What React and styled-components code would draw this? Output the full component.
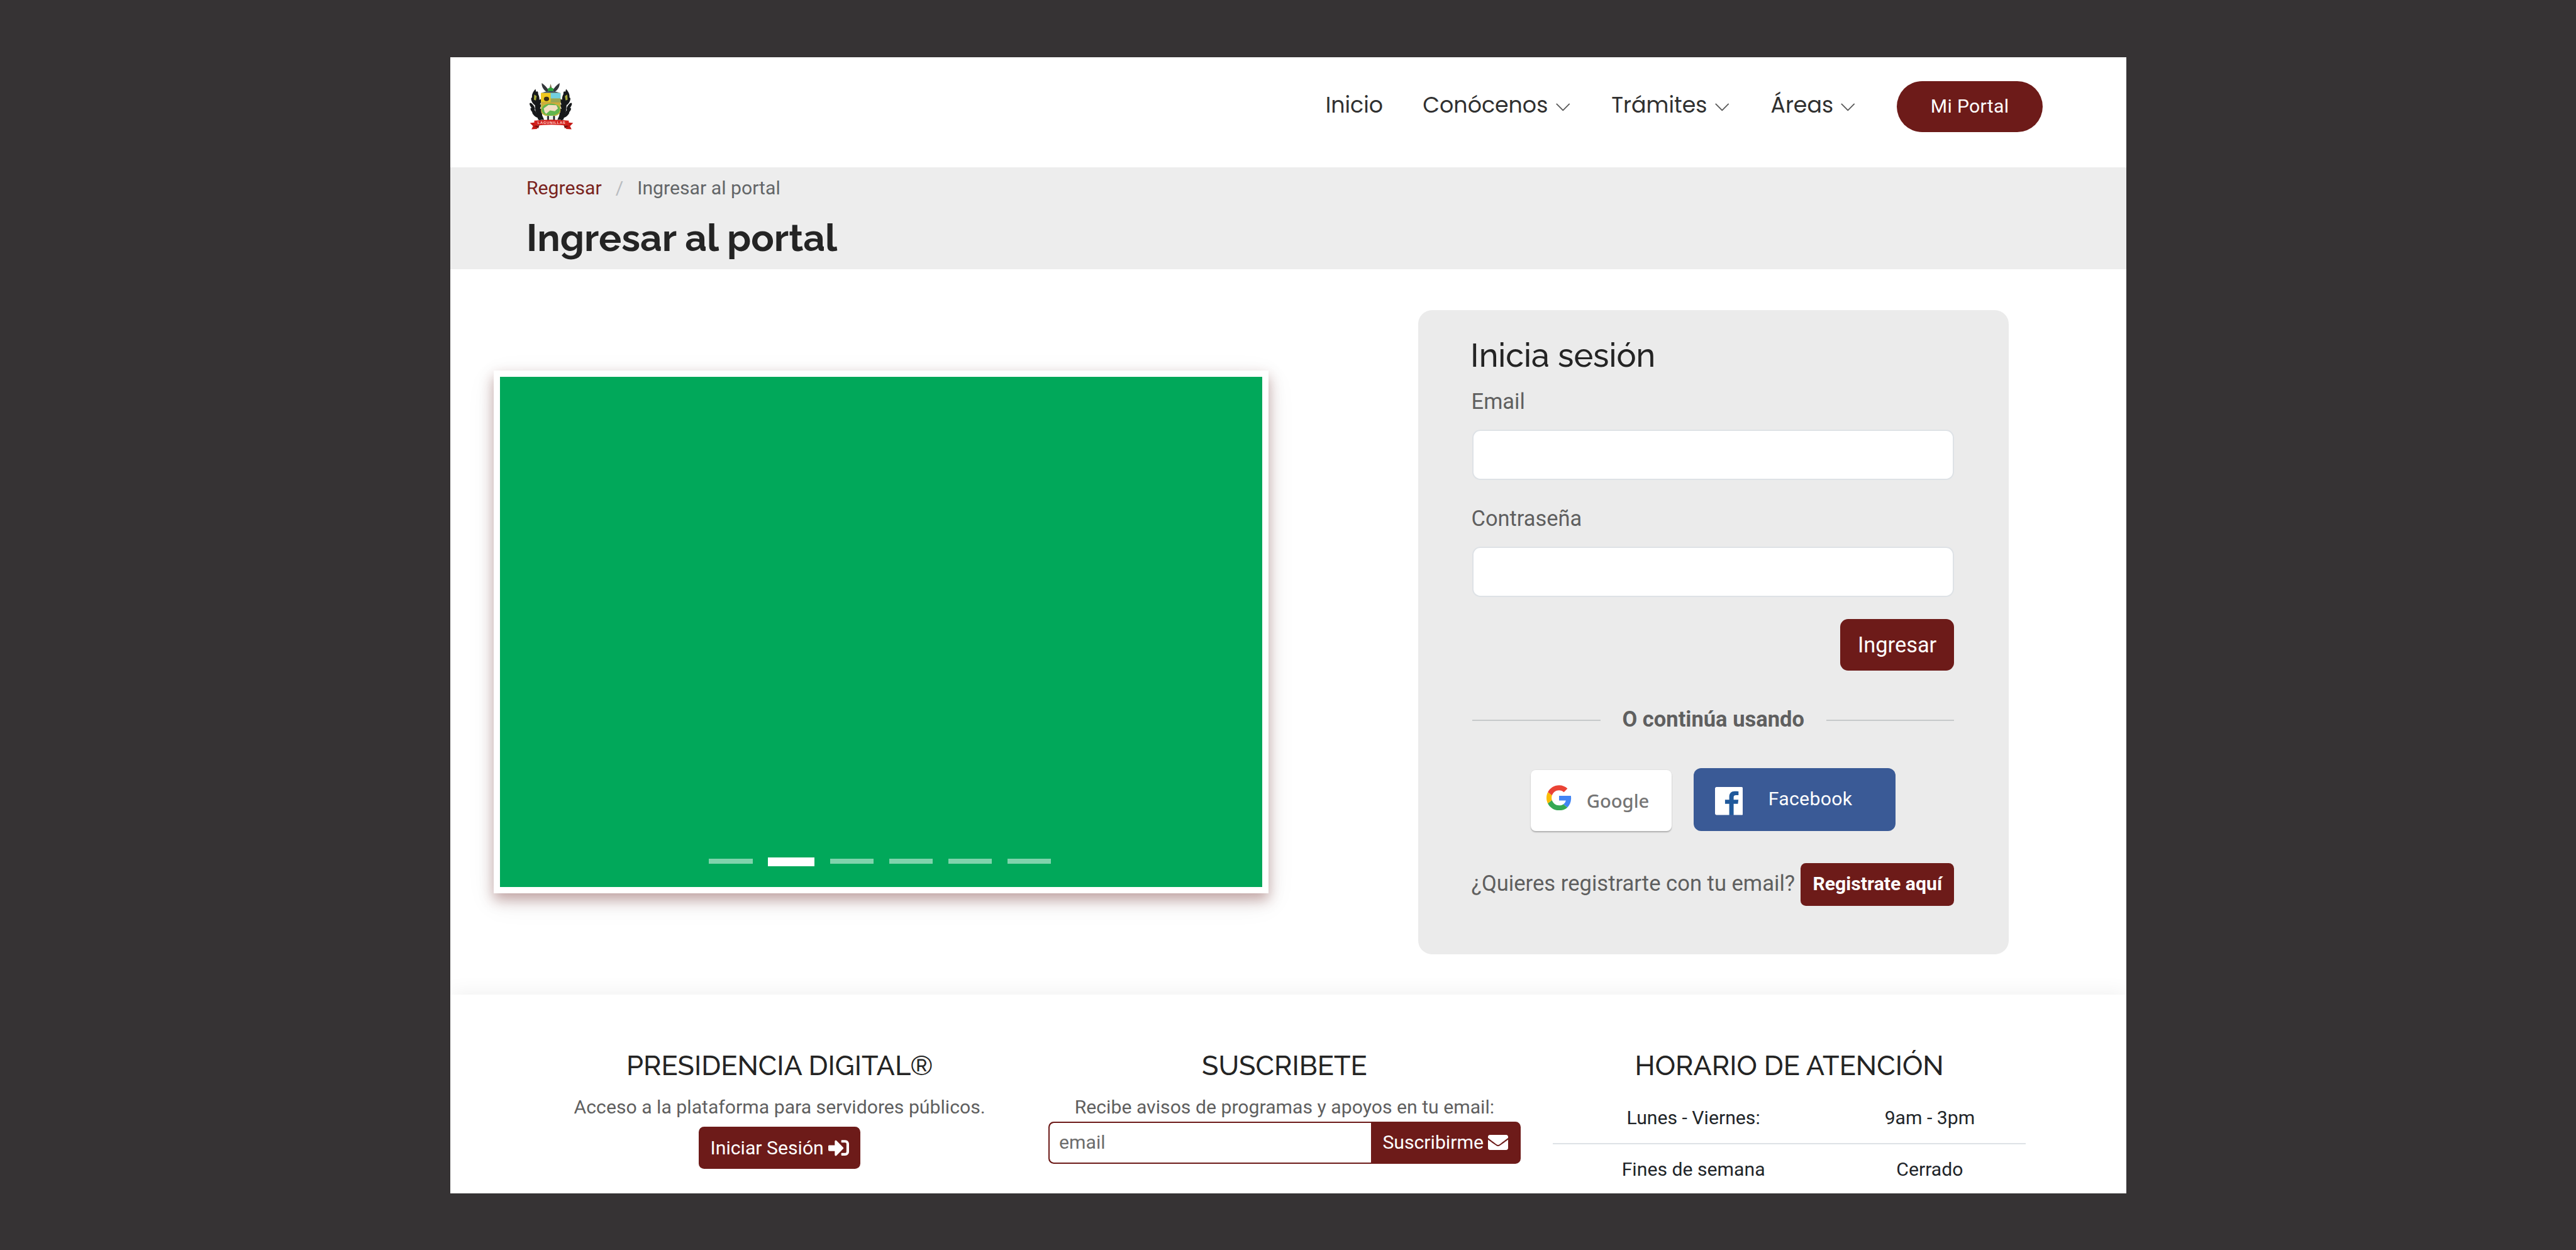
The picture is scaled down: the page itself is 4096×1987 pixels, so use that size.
import React from "react";
import styled, { createGlobalStyle } from "styled-components";
import { FaSignInAlt, FaEnvelope } from "react-icons/fa";

const maroon = "#6d1b19";
const bodyFont = `Roboto, "Liberation Sans", sans-serif`;
const headFont = `Raleway, Lato, sans-serif`;

const GlobalStyle = createGlobalStyle`
  *, *::before, *::after { box-sizing: border-box; }
  body { margin: 0; background: #363334; overflow: hidden; }
  h1, h2, h3, p { margin: 0; font-weight: inherit; }
`;

const Backdrop = styled.div`
  width: 4096px;
  height: 1987px;
  padding-top: 91px;
  background: #363334;
  display: flex;
  justify-content: center;
  align-items: flex-start;
`;

const Page = styled.div`
  width: 2665px;
  height: 1806px;
  background: #fff;
  overflow: hidden;
  display: flex;
  flex-direction: column;
  font-family: ${bodyFont};
  font-size: 30.2px;
  line-height: 44px;
  color: #5f5f5f;
`;

const Header = styled.header`
  flex: none;
  height: 174.5px;
  padding: 38.4px 132.4px 0 126px;
  display: flex;
  justify-content: space-between;
  align-items: flex-start;
`;

const Crest = styled.svg`
  width: 70px;
  height: 74px;
  margin-top: 3px;
`;

const Nav = styled.nav`
  display: flex;
  align-items: center;
  gap: 63.2px;
  height: 80.2px;
`;

const NavItem = styled.a`
  display: flex;
  align-items: center;
  gap: 12.3px;
  padding-bottom: 4px;
  font-family: Poppins, Inter, sans-serif;
  font-size: 34.8px;
  color: #303030;
  white-space: nowrap;
`;

const Chevron = styled.svg`
  width: 22.5px;
  height: 13.5px;
  margin: 6px 3px 0 0;
`;

const PortalButton = styled.a`
  width: 232px;
  height: 80.2px;
  border-radius: 41px;
  background: ${maroon};
  color: #fff;
  letter-spacing: 0.3px;
  display: flex;
  align-items: center;
  justify-content: center;
`;

const Band = styled.section`
  flex: none;
  height: 162px;
  padding: 11px 0 0 121.5px;
  background: #ededed;
`;

const Breadcrumb = styled.div`
  display: flex;
  gap: 22px;
`;

const Crumb = styled.span`
  color: ${(p) => p.$color};
`;

const Title = styled.h1`
  margin-top: 22.5px;
  font-family: ${headFont};
  font-weight: 700;
  font-size: 60.4px;
  line-height: 70px;
  color: #242424;
`;

const Main = styled.main`
  flex: none;
  height: 1153.4px;
  padding: 1px 186.8px 0 69px;
  display: flex;
  justify-content: space-between;
  align-items: center;
`;

const Carousel = styled.div`
  width: 1232.8px;
  height: 831px;
  border: 10.7px solid #fff;
  background: #01a85a;
  box-shadow: 0 10px 20px rgba(109, 27, 25, 0.36), 0 13px 43px rgba(0, 0, 0, 0.08);
  display: flex;
  align-items: flex-end;
  justify-content: center;
  padding-bottom: 34px;
`;

const Indicators = styled.div`
  display: flex;
  align-items: center;
  gap: 24.2px;
  height: 14px;
  margin-right: 3px;
`;

const Dash = styled.span`
  width: ${(p) => (p.$active ? 74 : 69.8)}px;
  height: ${(p) => (p.$active ? 13.5 : 7.4)}px;
  margin-top: ${(p) => (p.$active ? 1.5 : 0)}px;
  background: ${(p) => (p.$active ? "#fff" : "#80d3ac")};
`;

const Card = styled.form`
  width: 939.2px;
  height: 1024.3px;
  padding: 42.6px 86.4px 0 86.6px;
  border-radius: 22px;
  background: #ebebeb;
`;

const CardTitle = styled.h2`
  font-family: ${headFont};
  font-size: 52px;
  font-weight: 500;
  line-height: 60px;
  color: #242424;
  margin: 0 0 17.5px -3px;
`;

const Label = styled.label`
  display: block;
  font-size: 34.4px;
  line-height: 50px;
  margin: 0 0 20px -1.5px;
`;

const Input = styled.input`
  display: block;
  width: 100%;
  height: 80.2px;
  border: 2px solid #dee2e6;
  border-radius: 12.7px;
  background: #fff;
  margin: 0 0 35.7px;
  outline: none;
`;

const Submit = styled.button`
  display: block;
  width: 181.4px;
  height: 82px;
  margin-left: auto;
  padding: 0;
  border: 0;
  border-radius: 12.7px;
  background: ${maroon};
  color: #fff;
  font: 34.4px ${bodyFont};
`;

const Divider = styled.div`
  display: flex;
  align-items: center;
  margin-top: 51.2px;
  font-size: 34.5px;
  line-height: 50px;
  font-weight: 700;
`;

const Rule = styled.span`
  width: 203.5px;
  height: 2.2px;
  margin-top: 5px;
  background: #c6c9ca;
`;

const DividerText = styled.span`
  flex: 1;
  text-align: center;
`;

const Social = styled.div`
  display: flex;
  align-items: flex-end;
  gap: 34.3px;
  margin-top: 53.7px;
  padding-left: 92.7px;
`;

const GoogleButton = styled.a`
  width: 224.6px;
  height: 97px;
  padding: 0 0 3px 25.4px;
  border-radius: 8px;
  background: #fff;
  box-shadow: 0 2px 2px rgba(0, 0, 0, 0.25), 0 -1px 1px rgba(0, 0, 0, 0.04);
  display: flex;
  align-items: center;
  gap: 23.5px;
  font-family: "Noto Sans", sans-serif;
  font-weight: 500;
  font-size: 29.2px;
  color: #757575;
`;

const GoogleMark = styled.svg`
  width: 40px;
  height: 40.5px;
  margin-bottom: 6px;
`;

const GoogleText = styled.span`
  padding-top: 5px;
`;

const FacebookButton = styled.a`
  width: 321.6px;
  height: 99.6px;
  padding-left: 34.2px;
  border-radius: 12px;
  background: #3a5a96;
  display: flex;
  align-items: center;
  gap: 40.5px;
  color: #fff;
`;

const FacebookMark = styled.svg`
  width: 44.4px;
  height: 44.4px;
  margin-top: 5px;
`;

const FacebookText = styled.span`
  padding-bottom: 3px;
  letter-spacing: 0.3px;
`;

const Register = styled.div`
  display: flex;
  justify-content: space-between;
  align-items: center;
  margin-top: 51.4px;
  height: 67.4px;
  white-space: nowrap;
`;

const Question = styled.span`
  font-size: 34.6px;
  line-height: 50px;
  padding-bottom: 4.5px;
  margin-left: -1.5px;
`;

const RegisterLink = styled.a`
  width: 244px;
  height: 67.4px;
  border-radius: 8.5px;
  background: ${maroon};
  color: #fff;
  font-weight: 700;
  display: flex;
  align-items: center;
  justify-content: center;
  padding-bottom: 1px;
`;

const Footer = styled.footer`
  flex: none;
  height: 330px;
  padding: 88px 134px 0 122.8px;
  background: #fff;
  box-shadow: 0 0 32px rgba(0, 0, 0, 0.075);
  display: grid;
  grid-template-columns: repeat(3, 1fr);
`;

const Column = styled.section`
  padding: 0 25.5px;
  display: flex;
  flex-direction: column;
  align-items: center;
  white-space: nowrap;
`;

const FooterTitle = styled.h3`
  font-family: ${headFont};
  font-weight: 500;
  font-size: 43.3px;
  line-height: 50px;
  color: #242424;
  margin-bottom: 18.7px;
`;

const LoginButton = styled.a`
  width: 257px;
  height: 67.5px;
  margin-top: 9.4px;
  border-radius: 8.5px;
  background: ${maroon};
  color: #fff;
  display: flex;
  align-items: center;
  justify-content: center;
  gap: 7px;
`;

const Subscribe = styled.div`
  width: 751.6px;
  height: 67.5px;
  margin-top: 1px;
  border: 2.2px solid ${maroon};
  border-radius: 8.5px;
  background: ${maroon};
  display: flex;
  overflow: hidden;
`;

const EmailField = styled.span`
  width: 511.5px;
  padding-left: 15.5px;
  border-radius: 6.5px 0 0 6.5px;
  background: #fff;
  color: #6c6c6c;
  display: flex;
  align-items: center;
`;

const SubscribeButton = styled.span`
  flex: 1;
  display: flex;
  align-items: center;
  justify-content: center;
  gap: 7px;
  color: #fff;
`;

const Schedule = styled.div`
  width: 751.6px;
  margin-top: -1.4px;
  color: #212529;
`;

const ScheduleRow = styled.div`
  height: ${(p) => (p.$ruled ? 83 : 79)}px;
  border-bottom: ${(p) => (p.$ruled ? "2.2px solid #dee2e6" : "0")};
  display: grid;
  grid-template-columns: 446.6px 1fr;
  align-items: center;
  text-align: center;
`;

const leaves = [
  [34, 62, 15], [20, 92, -28], [48, 100, 30], [14, 118, -35], [45, 125, 35],
  [20, 142, -42], [50, 148, 28], [30, 160, -48], [55, 168, 10],
];

function Branch() {
  return (
    <g fill="#17191b">
      <path d="M30 30 C8 52 6 80 26 98 L30 140 L44 186 L74 186 L58 150 L48 102 C54 72 46 54 34 46 Z" />
      {leaves.map(([x, y, r]) => (
        <ellipse key={`${x}-${y}`} cx={x} cy={y} rx="8" ry="21" transform={`rotate(${r} ${x} ${y})`} />
      ))}
      <path d="M24 58 L36 66 L32 88 L22 84 Z" fill="#a5a83a" />
    </g>
  );
}

function CrestLogo() {
  return (
    <Crest viewBox="0 0 223 235">
      <Branch />
      <g transform="translate(215 0) scale(-1 1)">
        <Branch />
      </g>
      <path d="M62 0 C60 18 72 38 88 44 L98 38 C88 22 76 10 62 0 Z" fill="#33363a" />
      <path d="M152 0 C154 18 142 38 126 44 L116 38 C126 22 138 10 152 0 Z" fill="#33363a" />
      <path d="M107 4 L114 30 H100 Z" fill="#7d6a4a" />
      <ellipse cx="107" cy="34" rx="15" ry="11" fill="#2fa33f" />
      <path d="M60 50 Q107 30 155 50 Z" fill="#34495a" />
      <path d="M58 50 H157 V140 Q155 162 130 166 H84 Q60 162 58 140 Z" fill="#c2b53c" />
      <path d="M58 50 H107 V94 H58 Z" fill="#f0c81e" />
      <path d="M107 50 H157 V78 H107 Z" fill="#72cfe0" />
      <path d="M107 78 H157 V98 H107 Z" fill="#9aa653" />
      <ellipse cx="86" cy="80" rx="13" ry="11" fill="#3a2f16" />
      <path d="M60 98 H156 V106 H60 Z" fill="#d2a83a" />
      <ellipse cx="108" cy="134" rx="46" ry="31" fill="#62b54e" />
      <path d="M72 128 L96 110 L136 112 L144 128 L128 142 L104 138 L84 156 L76 146 Z" fill="#f3dfc4" />
      <path d="M80 166 H136 L130 188 H88 Z" fill="#e9efe9" />
      <path d="M90 166 H98 V188 H90 Z M120 166 H128 V188 H120 Z" fill="#17191b" />
      <path d="M2 202 L38 198 V232 L10 234 L18 218 Z" fill="#c41815" />
      <path d="M221 202 L185 198 V232 L213 234 L205 218 Z" fill="#c41815" />
      <path d="M24 190 Q111 180 199 190 V216 Q111 206 24 216 Z" fill="#d3211d" />
      <path d="M24 216 L50 213 L44 230 Z M199 216 L173 213 L179 230 Z" fill="#7c0f0d" />
      <text x="111" y="208" textAnchor="middle" fontSize="19" fontWeight="700" fontFamily="Liberation Sans, sans-serif" fill="#ffd9d3" textLength="140">
        LAGUNILLAS
      </text>
    </Crest>
  );
}

function ChevronDown() {
  return (
    <Chevron viewBox="0 0 23 14">
      <path d="M1.2 1.5 L11.5 11.8 L21.8 1.5" fill="none" stroke="#5a5a5a" strokeWidth="1.9" strokeLinecap="round" strokeLinejoin="round" />
    </Chevron>
  );
}

function GoogleG() {
  return (
    <GoogleMark viewBox="0 0 48 48">
      <path fill="#ea4335" d="M24 9.5c3.54 0 6.71 1.22 9.21 3.6l6.85-6.85C35.9 2.38 30.47 0 24 0 14.62 0 6.51 5.38 2.56 13.22l7.98 6.19C12.43 13.72 17.74 9.5 24 9.5z" />
      <path fill="#4285f4" d="M46.98 24.55c0-1.57-.15-3.09-.38-4.55H24v9.02h12.94c-.58 2.96-2.26 5.48-4.78 7.18l7.73 6c4.51-4.18 7.09-10.36 7.09-17.65z" />
      <path fill="#fbbc05" d="M10.53 28.59c-.48-1.45-.76-2.99-.76-4.59s.27-3.14.76-4.59l-7.98-6.19C.92 16.46 0 20.12 0 24c0 3.88.92 7.54 2.56 10.78l7.97-6.19z" />
      <path fill="#34a853" d="M24 48c6.48 0 11.93-2.13 15.89-5.81l-7.73-6c-2.15 1.45-4.92 2.3-8.16 2.3-6.26 0-11.57-4.22-13.47-9.91l-7.98 6.19C6.51 42.62 14.62 48 24 48z" />
    </GoogleMark>
  );
}

function FacebookF() {
  return (
    <FacebookMark viewBox="0 0 24 24">
      <path d="M8 3h13v20.9H8z" fill="#20599b" />
      <path fill="#fff" d="M22.676 0H1.324C.593 0 0 .593 0 1.324v21.352C0 23.408.593 24 1.324 24h10.9v-9.6H8.6v-3.5h3.624V8.41c0-3.099 1.894-4.785 4.659-4.785 1.325 0 2.9.097 3.3.141v3.24h-2.2c-1.5 0-1.992.721-1.992 1.771V10.9h4.1l-.4 3.5h-3.7V24h6.985c.733 0 1.325-.592 1.325-1.324V1.324C24 .593 23.408 0 22.676 0" />
    </FacebookMark>
  );
}

const menu = [
  { label: "Inicio" },
  { label: "Conócenos", dropdown: true },
  { label: "Trámites", dropdown: true },
  { label: "Áreas", dropdown: true },
];

export default function App() {
  return (
    <Backdrop>
      <GlobalStyle />
      <Page>
        <Header>
          <CrestLogo />
          <Nav>
            {menu.map((m) => (
              <NavItem key={m.label}>
                <span>{m.label}</span>
                {m.dropdown && <ChevronDown />}
              </NavItem>
            ))}
            <PortalButton>Mi Portal</PortalButton>
          </Nav>
        </Header>

        <Band>
          <Breadcrumb>
            <Crumb $color="#7a2320">Regresar</Crumb>
            <Crumb $color="#b9bcc0">/</Crumb>
            <Crumb $color="#636668">Ingresar al portal</Crumb>
          </Breadcrumb>
          <Title>Ingresar al portal</Title>
        </Band>

        <Main>
          <Carousel>
            <Indicators>
              {[0, 1, 2, 3, 4, 5].map((i) => (
                <Dash key={i} $active={i === 1} />
              ))}
            </Indicators>
          </Carousel>
          <Card>
            <CardTitle>Inicia sesión</CardTitle>
            <Label>Email</Label>
            <Input type="email" />
            <Label>Contraseña</Label>
            <Input type="password" />
            <Submit type="button">Ingresar</Submit>
            <Divider>
              <Rule />
              <DividerText>O continúa usando</DividerText>
              <Rule />
            </Divider>
            <Social>
              <GoogleButton>
                <GoogleG />
                <GoogleText>Google</GoogleText>
              </GoogleButton>
              <FacebookButton>
                <FacebookF />
                <FacebookText>Facebook</FacebookText>
              </FacebookButton>
            </Social>
            <Register>
              <Question>¿Quieres registrarte con tu email?</Question>
              <RegisterLink>Registrate aquí</RegisterLink>
            </Register>
          </Card>
        </Main>

        <Footer>
          <Column>
            <FooterTitle>PRESIDENCIA DIGITAL®</FooterTitle>
            <p>Acceso a la plataforma para servidores públicos.</p>
            <LoginButton>
              Iniciar Sesión <FaSignInAlt size={33} />
            </LoginButton>
          </Column>
          <Column>
            <FooterTitle>SUSCRIBETE</FooterTitle>
            <p>Recibe avisos de programas y apoyos en tu email:</p>
            <Subscribe>
              <EmailField>email</EmailField>
              <SubscribeButton>
                Suscribirme <FaEnvelope size={32} />
              </SubscribeButton>
            </Subscribe>
          </Column>
          <Column>
            <FooterTitle>HORARIO DE ATENCIÓN</FooterTitle>
            <Schedule>
              <ScheduleRow $ruled>
                <span>Lunes - Viernes:</span>
                <span>9am - 3pm</span>
              </ScheduleRow>
              <ScheduleRow>
                <span>Fines de semana</span>
                <span>Cerrado</span>
              </ScheduleRow>
            </Schedule>
          </Column>
        </Footer>
      </Page>
    </Backdrop>
  );
}
